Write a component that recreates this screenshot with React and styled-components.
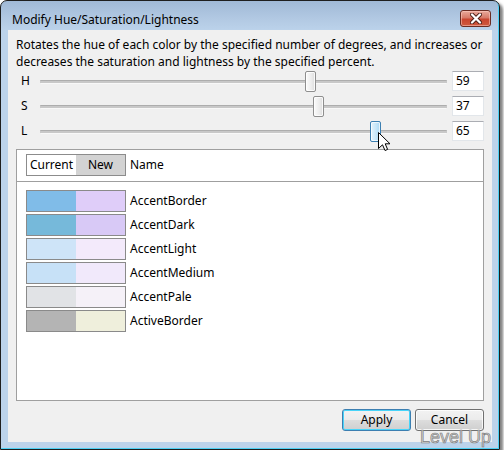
import React from 'react';
import styled, { createGlobalStyle } from 'styled-components';

const Global = createGlobalStyle`
  html, body { margin: 0; padding: 0; background: #fff; }
  body { font-family: "Noto Sans", "Open Sans", sans-serif; font-size: 12px; color: #000; }
  * { box-sizing: border-box; }
`;

const Window = styled.div`
  position: relative;
  width: 500px;
  height: 450px;
  border: 1px solid #1e1e1e;
  border-radius: 7px 7px 0 0;
  background: linear-gradient(#a0b9d6 0px, #b2c9e3 18px, #bcd3eb 30px, #bcd3eb 100%);
  box-shadow: inset -1px -1px 0 #4cd0f4, 3px 3px 3px rgba(0, 0, 0, 0.5);
  display: flex;
  flex-direction: column;
`;

const TitleBar = styled.div`
  height: 29px;
  display: flex;
  align-items: flex-start;
  justify-content: space-between;
  padding: 0 8px 0 11px;
`;

const Title = styled.div`
  margin-top: 11px;
  font-size: 12px;
  line-height: 15px;
  color: #000;
`;

const CloseButton = styled.div`
  margin-top: 9px;
  width: 31px;
  height: 17px;
  border: 1px solid #6a2c22;
  border-radius: 3px;
  background: linear-gradient(#e9a99b 0%, #d77a68 45%, #c9452f 55%, #cf5a3f 100%);
  box-shadow: inset 0 0 0 1px rgba(255, 210, 200, 0.5);
  display: flex;
  align-items: center;
  justify-content: center;
`;

const Client = styled.div`
  flex: 1;
  margin: 0 7px 7px 7px;
  background: #f0f0f0;
  padding: 7px 8px 11px 8px;
  display: flex;
  flex-direction: column;
`;

const Description = styled.div`
  line-height: 16.5px;
`;

const Sliders = styled.div`
  margin-top: 1px;
  display: flex;
  flex-direction: column;
  gap: 5px;
`;

const SliderRow = styled.div`
  display: flex;
  align-items: center;
  height: 20px;
`;

const SliderLabel = styled.div`
  width: 24px;
  padding-left: 5px;
  line-height: 20px;
`;

const Track = styled.div`
  position: relative;
  flex: 1;
  height: 20px;
  &::before {
    content: '';
    position: absolute;
    left: 0;
    right: 0;
    top: 9px;
    height: 2px;
    border-radius: 1px;
    border-top: 1px solid #adadad;
    border-bottom: 1px solid #f8f8f8;
    background: #c8c8c8;
  }
`;

const Thumb = styled.div`
  position: absolute;
  top: 0;
  width: 11px;
  height: 21px;
  border-radius: 2px;
  border: 1px solid ${(p) => (p.$hot ? '#3c7fb1' : '#8e8e8e')};
  background: ${(p) =>
    p.$hot
      ? 'linear-gradient(to right, #e5f4fc, #c4e5f8 60%, #a9d8f4)'
      : 'linear-gradient(to right, #fbfbfb, #ececec 60%, #dcdcdc)'};
  box-shadow: inset 0 0 0 1px ${(p) => (p.$hot ? 'rgba(255,255,255,0.7)' : 'rgba(255,255,255,0.8)')};
`;

const ValueBox = styled.div`
  margin-left: 5px;
  width: 32px;
  height: 20px;
  background: #fff;
  border: 1px solid #e2e6ea;
  border-top-color: #abadb3;
  padding-left: 3px;
  line-height: 18px;
`;

const ListBox = styled.div`
  margin-top: 8px;
  flex: 1;
  background: #fff;
  border: 1px solid #9f9f9f;
  display: flex;
  flex-direction: column;
`;

const Header = styled.div`
  height: 32px;
  border-bottom: 1px solid #9f9f9f;
  padding: 4px 9px 0 9px;
  display: flex;
  align-items: flex-start;
`;

const HeaderSwatch = styled.div`
  display: flex;
  width: 100px;
  height: 22px;
  border: 1px solid #8c8c8c;
`;

const HeaderCell = styled.div`
  width: ${(p) => p.$w}px;
  background: ${(p) => p.$bg};
  text-align: center;
  line-height: 20px;
`;

const NameLabel = styled.div`
  margin-left: 4px;
  line-height: 22px;
`;

const Rows = styled.div`
  padding: 8px 9px;
  display: flex;
  flex-direction: column;
  gap: 2px;
`;

const Row = styled.div`
  display: flex;
  align-items: center;
  height: 22px;
`;

const Swatch = styled.div`
  display: flex;
  width: 100px;
  height: 22px;
  border: 1px solid #8a8a8a;
`;

const SwatchHalf = styled.div`
  width: 49px;
  background: ${(p) => p.$c};
`;

const Buttons = styled.div`
  margin-top: 8px;
  display: flex;
  justify-content: flex-end;
  gap: 4px;
`;

const Button = styled.div`
  width: 69px;
  height: 22px;
  border-radius: 3px;
  border: 1px solid ${(p) => (p.$default ? '#3c7fb1' : '#707070')};
  background: linear-gradient(#f2f2f2 0%, #ebebeb 50%, #dddddd 51%, #cfcfcf 100%);
  box-shadow: inset 0 0 0 1px ${(p) => (p.$default ? '#48d4f9' : 'rgba(255,255,255,0.8)')};
  text-align: center;
  line-height: 20px;
`;

const Watermark = styled.div`
  position: absolute;
  left: 419px;
  top: 427px;
  font-family: "Liberation Sans", Arial, sans-serif;
  font-size: 18px;
  line-height: 18px;
  color: #d6d6d6;
  -webkit-text-stroke: 0.7px #808080;
  pointer-events: none;
`;

const Cursor = styled.svg`
  position: absolute;
  left: 377px;
  top: 131px;
`;

const sliders = [
  { label: 'H', value: 59, frac: (59 + 180) / 360 },
  { label: 'S', value: 37, frac: (37 + 100) / 200 },
  { label: 'L', value: 65, frac: (65 + 100) / 200, hot: true },
];

const colors = [
  { name: 'AccentBorder', cur: '#80bce8', nw: '#dfcdf9' },
  { name: 'AccentDark', cur: '#76b9da', nw: '#d8c9f6' },
  { name: 'AccentLight', cur: '#cee4f8', nw: '#f3eafb' },
  { name: 'AccentMedium', cur: '#c7e1f7', nw: '#f1e9fb' },
  { name: 'AccentPale', cur: '#e1e3e6', nw: '#f5f1f8' },
  { name: 'ActiveBorder', cur: '#b4b4b4', nw: '#efefdc' },
];

const TRACK_W = 407;

export default function App() {
  return (
    <>
      <Global />
      <Window>
        <TitleBar>
          <Title>Modify Hue/Saturation/Lightness</Title>
          <CloseButton>
            <svg width="12" height="11" viewBox="0 0 12 11">
              <path d="M2 1.5 L10 9.5 M10 1.5 L2 9.5" stroke="#4a1e16" strokeWidth="4" strokeLinecap="round" />
              <path d="M2 1.5 L10 9.5 M10 1.5 L2 9.5" stroke="#ffffff" strokeWidth="2.3" strokeLinecap="round" />
            </svg>
          </CloseButton>
        </TitleBar>
        <Client>
          <Description>
            Rotates the hue of each color by the specified number of degrees, and increases or
            <br />
            decreases the saturation and lightness by the specified percent.
          </Description>
          <Sliders>
            {sliders.map((s) => (
              <SliderRow key={s.label}>
                <SliderLabel>{s.label}</SliderLabel>
                <Track>
                  <Thumb $hot={s.hot} style={{ left: Math.round(s.frac * TRACK_W - 5.5) }} />
                </Track>
                <ValueBox>{s.value}</ValueBox>
              </SliderRow>
            ))}
          </Sliders>
          <ListBox>
            <Header>
              <HeaderSwatch>
                <HeaderCell $w={49} $bg="#ffffff">Current</HeaderCell>
                <HeaderCell $w={49} $bg="#d3d3d3">New</HeaderCell>
              </HeaderSwatch>
              <NameLabel>Name</NameLabel>
            </Header>
            <Rows>
              {colors.map((c) => (
                <Row key={c.name}>
                  <Swatch>
                    <SwatchHalf $c={c.cur} />
                    <SwatchHalf $c={c.nw} />
                  </Swatch>
                  <NameLabel>{c.name}</NameLabel>
                </Row>
              ))}
            </Rows>
          </ListBox>
          <Buttons>
            <Button $default>Apply</Button>
            <Button>Cancel</Button>
          </Buttons>
        </Client>
        <Watermark>Level Up</Watermark>
        <Cursor width="13" height="20" viewBox="0 0 13 20">
          <path d="M0.5 0.5 L0.5 16.5 L4.5 12.8 L7 18.5 L9.6 17.4 L7.2 11.8 L12 11.8 Z" fill="#fff" stroke="#000" strokeWidth="1" strokeLinejoin="miter" />
        </Cursor>
      </Window>
    </>
  );
}
